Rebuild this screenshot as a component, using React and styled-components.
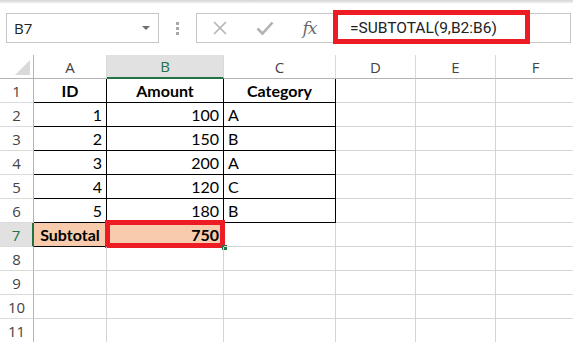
import React from 'react';
import styled, { createGlobalStyle, css } from 'styled-components';

const Global = createGlobalStyle`
  html, body { margin: 0; padding: 0; background: #fff; overflow: hidden; }
  * { box-sizing: border-box; }
`;

const Page = styled.div`
  width: 573px;
  height: 342px;
  overflow: hidden;
  background: #fff;
  display: flex;
  flex-direction: column;
`;

const TopStrip = styled.div`
  height: 3px;
  flex-shrink: 0;
  background: linear-gradient(#d6d6d6, #efefef);
`;

const FormulaRow = styled.div`
  display: flex;
  height: 30px;
  margin-top: 10px;
  padding-left: 6px;
  flex-shrink: 0;
`;

const NameBox = styled.div`
  width: 153px;
  border: 1px solid #c6c6c6;
  display: flex;
  align-items: center;
  padding-left: 7px;
  padding-right: 8px;
  font-family: "Open Sans", sans-serif;
  font-size: 15px;
  color: #222;
`;

const DropArrow = styled.span`
  margin-left: auto;
  width: 0;
  height: 0;
  border-left: 4px solid transparent;
  border-right: 4px solid transparent;
  border-top: 4px solid #6f6f6f;
`;

const DotsSlot = styled.div`
  width: 37px;
  display: flex;
  flex-direction: column;
  align-items: center;
  justify-content: center;
  gap: 2px;
`;

const Dot = styled.span`
  width: 3px;
  height: 3px;
  background: #a8a8a8;
`;

const FormulaBox = styled.div`
  flex: 1;
  margin-right: 2px;
  border: 1px solid #c6c6c6;
  position: relative;
  display: flex;
  align-items: center;
`;

const ToolSlot = styled.div`
  width: 45px;
  height: 100%;
  display: flex;
  align-items: center;
  justify-content: center;
  color: #b3b3b3;
`;

const FxText = styled.span`
  font-family: "DejaVu Serif", "Liberation Serif", serif;
  font-style: italic;
  font-size: 17px;
  color: #6a6a6a;
  letter-spacing: -1px;
`;

const FormulaText = styled.div`
  padding-left: 18px;
  font-family: Roboto, "Open Sans", sans-serif;
  font-size: 15.5px;
  color: #222;
`;

const RedFrame = styled.div`
  position: absolute;
  border: 5px solid #ed1c24;
  pointer-events: none;
  ${p => p.$formula && css`
    left: 136px;
    top: -4px;
    width: 197px;
    height: 34px;
  `}
  ${p => p.$cell && css`
    left: -2px;
    top: -3px;
    right: -2px;
    bottom: -2px;
  `}
`;

const Grid = styled.div`
  margin-top: 12px;
  display: grid;
  grid-template-columns: 34px 73px 117px 112px 80px 80px 80px;
  grid-auto-rows: 24px;
`;

const Corner = styled.div`
  border-right: 1px solid #b4b4b4;
  border-bottom: 1px solid #b4b4b4;
  position: relative;
  &::after {
    content: "";
    position: absolute;
    right: 3px;
    bottom: 3px;
    width: 15px;
    height: 15px;
    background: #d9d9d9;
    clip-path: polygon(100% 0, 100% 100%, 0 100%);
  }
`;

const ColHead = styled.div`
  display: flex;
  align-items: center;
  justify-content: center;
  font-family: "Open Sans", sans-serif;
  font-size: 15px;
  color: #444;
  background: #fff;
  border-right: 1px solid #dadada;
  border-bottom: 1px solid #b4b4b4;
  ${p => p.$active && css`
    background: #e1e1e1;
    color: #217346;
    border-bottom: 2px solid #217346;
  `}
`;

const RowHead = styled.div`
  display: flex;
  align-items: center;
  justify-content: center;
  font-family: "Open Sans", sans-serif;
  font-size: 15px;
  color: #444;
  border-right: 1px solid #b4b4b4;
  border-bottom: 1px solid #dadada;
  ${p => p.$active && css`
    background: #e1e1e1;
    color: #217346;
    border-right: 2px solid #217346;
  `}
`;

const Cell = styled.div`
  position: relative;
  display: flex;
  align-items: center;
  padding: 0 4px;
  font-family: Lato, "Noto Sans", sans-serif;
  font-size: 16px;
  color: #000;
  border-right: 1px solid #d4d4d4;
  border-bottom: 1px solid #d4d4d4;
  justify-content: ${p => (p.$align === 'right' ? 'flex-end' : p.$align === 'center' ? 'center' : 'flex-start')};
  font-weight: ${p => (p.$bold ? 700 : 400)};
  ${p => p.$fill && css`background: #f8cbad;`}
  ${p => p.$boxed && css`
    border-right-color: #000;
    border-bottom-color: #000;
  `}
`;

const FillHandle = styled.span`
  position: absolute;
  right: -4px;
  bottom: -4px;
  width: 5px;
  height: 5px;
  background: #217346;
`;

const columns = ['A', 'B', 'C', 'D', 'E', 'F'];

const data = [
  [1, 100, 'A'],
  [2, 150, 'B'],
  [3, 200, 'A'],
  [4, 120, 'C'],
  [5, 180, 'B'],
];

function XIcon() {
  return (
    <svg width="16" height="16" viewBox="0 0 16 16">
      <path d="M2 2 L14 14 M14 2 L2 14" stroke="#b3b3b3" strokeWidth="1.6" fill="none" />
    </svg>
  );
}

function CheckIcon() {
  return (
    <svg width="18" height="16" viewBox="0 0 18 16">
      <path d="M1.5 8.5 L6.5 13.5 L16.5 2.5" stroke="#b3b3b3" strokeWidth="2.6" fill="none" />
    </svg>
  );
}

function EmptyCells({ from }) {
  return columns.slice(from).map(c => <Cell key={c} />);
}

export default function App() {
  return (
    <Page>
      <Global />
      <TopStrip />
      <FormulaRow>
        <NameBox>
          B7
          <DropArrow />
        </NameBox>
        <DotsSlot>
          <Dot />
          <Dot />
          <Dot />
        </DotsSlot>
        <FormulaBox>
          <ToolSlot><XIcon /></ToolSlot>
          <ToolSlot><CheckIcon /></ToolSlot>
          <ToolSlot><FxText>fx</FxText></ToolSlot>
          <FormulaText>=SUBTOTAL(9,B2:B6)</FormulaText>
          <RedFrame $formula />
        </FormulaBox>
      </FormulaRow>
      <Grid>
        <Corner />
        {columns.map(c => (
          <ColHead key={c} $active={c === 'B'}>{c}</ColHead>
        ))}

        <RowHead>1</RowHead>
        <Cell $boxed $bold $align="center">ID</Cell>
        <Cell $boxed $bold $align="center">Amount</Cell>
        <Cell $boxed $bold $align="center">Category</Cell>
        <EmptyCells from={3} />

        {data.map((r, i) => (
          <React.Fragment key={i}>
            <RowHead>{i + 2}</RowHead>
            <Cell $boxed $align="right">{r[0]}</Cell>
            <Cell $boxed $align="right">{r[1]}</Cell>
            <Cell $boxed>{r[2]}</Cell>
            <EmptyCells from={3} />
          </React.Fragment>
        ))}

        <RowHead $active>7</RowHead>
        <Cell $boxed $fill $bold $align="center">Subtotal</Cell>
        <Cell $fill $bold $align="right">
          750
          <RedFrame $cell />
          <FillHandle />
        </Cell>
        <EmptyCells from={2} />

        {[8, 9, 10, 11].map(n => (
          <React.Fragment key={n}>
            <RowHead>{n}</RowHead>
            <EmptyCells from={0} />
          </React.Fragment>
        ))}
      </Grid>
    </Page>
  );
}
